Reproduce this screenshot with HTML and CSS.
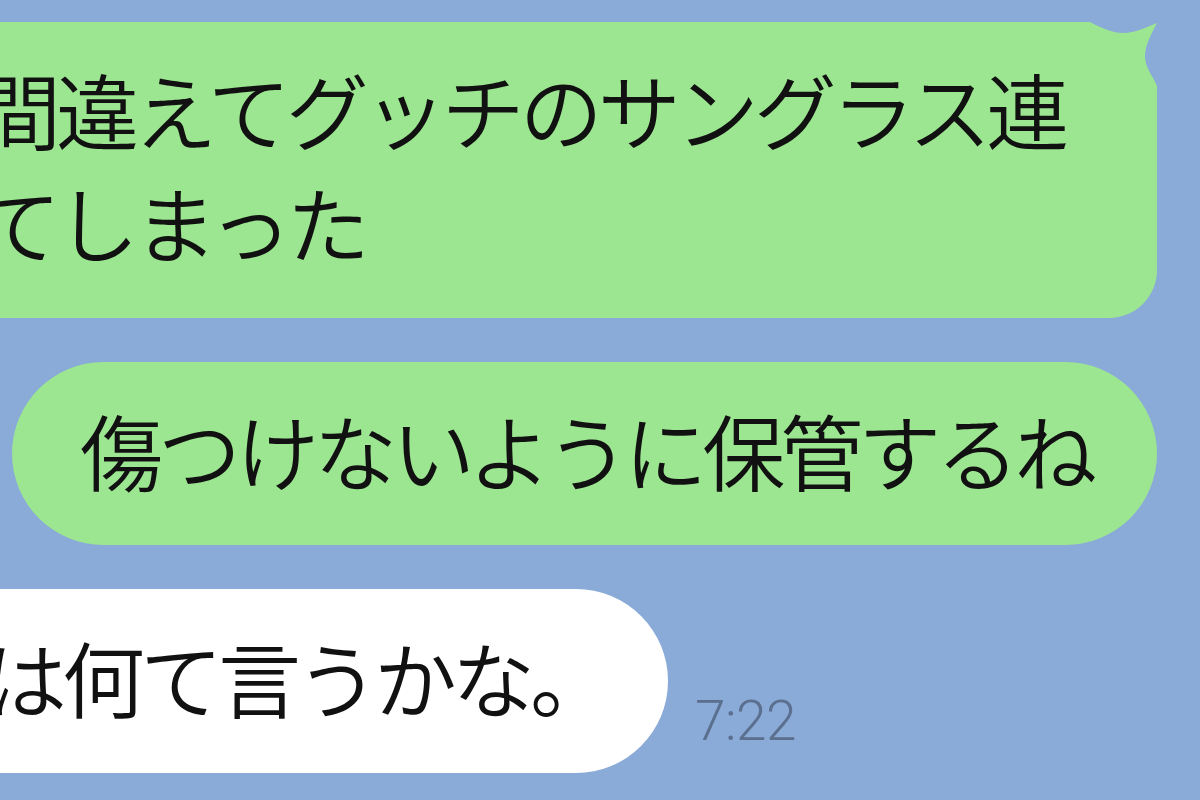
FILE: index.html
```html
<!DOCTYPE html>
<html lang="ja">

<head>
    <meta charset="UTF-8">
    <meta name="viewport" content="width=device-width, initial-scale=1.0">
    <title>トーク</title>
    <link rel="stylesheet" href="styles.css">
</head>

<body>
    <!-- Chat -->
    <div class="chat">
        <!-- Sent: first message with tail -->
        <div class="row row--me">
            <div class="bubble bubble--me bubble--first">
                <span class="line">間違えてグッチのサングラス連</span>
                <span class="line">てしまった</span>
                <svg class="tail" width="82" height="90" viewBox="0 0 82 90" aria-hidden="true">
                    <path d="M11 2 C22 8 34 13 44 13 C56 13 68 7 78 3 C72 14 66 26 66 36 C66 48 74 56 78 66 L82 66 L82 0 L11 0 Z" fill="#8aaad7" />
                </svg>
            </div>
        </div>

        <!-- Sent -->
        <div class="row row--me">
            <div class="bubble bubble--me bubble--pill">傷つけないように保管するね</div>
        </div>

        <!-- Received -->
        <div class="row row--them">
            <div class="bubble bubble--them">は何て言うかな。</div>
            <span class="time">7:22</span>
        </div>
    </div>
</body>

</html>
```

FILE: styles.css
```css
body {
    margin: 0;
    background-color: #8aaad7;
    font-family: "Noto Sans CJK JP", "Noto Sans", sans-serif;
    color: #111;
    overflow: hidden;
}

.chat {
    width: 1200px;
    height: 800px;
    padding-top: 22px;
    box-sizing: border-box;
    display: flex;
    flex-direction: column;
    gap: 44px;
}

.row {
    display: flex;
    align-items: flex-end;
}

.row--me {
    justify-content: flex-end;
    padding-right: 43px;
}

.row--them {
    gap: 27px;
}

.bubble {
    font-size: 83px;
    font-weight: 350;
    letter-spacing: -5px;
    white-space: nowrap;
}

.bubble--me {
    background-color: #9de691;
}

.bubble--first {
    position: relative;
    margin-left: -70px;
    width: 1227px;
    box-sizing: border-box;
    padding: 30px 0 40px 48px;
    border-radius: 48px 0 48px 48px;
}

.bubble--first .line {
    display: block;
    line-height: 113px;
}

.tail {
    position: absolute;
    top: -2px;
    right: -4px;
}

.bubble--pill {
    width: 1145px;
    box-sizing: border-box;
    padding: 0 0 8px 68px;
    line-height: 175px;
    border-radius: 92px;
}

.bubble--them {
    background-color: #fff;
    margin-left: -16px;
    width: 684px;
    box-sizing: border-box;
    padding-bottom: 10px;
    line-height: 174px;
    border-radius: 0 92px 92px 0;
}

.time {
    font-family: Roboto, sans-serif;
    font-size: 55px;
    font-weight: 300;
    letter-spacing: -0.5px;
    line-height: 1;
    color: #5b6f8e;
    margin-bottom: 24px;
}
```
